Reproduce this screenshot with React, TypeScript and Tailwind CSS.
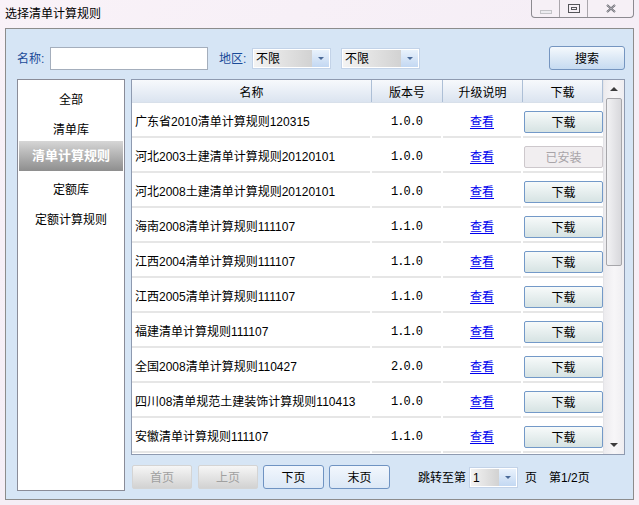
import React from "react";

const rows: { name: string; ver: string; installed?: boolean }[] = [
  { name: "广东省2010清单计算规则120315", ver: "1.0.0" },
  { name: "河北2003土建清单计算规则20120101", ver: "1.0.0", installed: true },
  { name: "河北2008土建清单计算规则20120101", ver: "1.0.0" },
  { name: "海南2008清单计算规则111107", ver: "1.1.0" },
  { name: "江西2004清单计算规则111107", ver: "1.1.0" },
  { name: "江西2005清单计算规则111107", ver: "1.1.0" },
  { name: "福建清单计算规则111107", ver: "1.1.0" },
  { name: "全国2008清单计算规则110427", ver: "2.0.0" },
  { name: "四川08清单规范土建装饰计算规则110413", ver: "1.0.0" },
  { name: "安徽清单计算规则111107", ver: "1.1.0" },
];

function Select({ value, w }: { value: string; w: string }) {
  return (
    <div className={`flex h-[21px] ${w} border border-[#c3d3e8] bg-white p-[1px]`}>
      <div className="flex flex-1 items-center bg-gradient-to-r from-[#f3f3f3] to-[#d2d2d2] pl-[2px] pt-[1px] text-[12px] leading-none text-black">
        {value}
      </div>
      <div className="flex w-[17px] items-center justify-center bg-gradient-to-b from-[#e9f2fc] to-[#c3d8f2]">
        <div className="h-0 w-0 border-x-[3px] border-t-[3px] border-x-transparent border-t-[#4a6a98]" />
      </div>
    </div>
  );
}

export default function App() {
  const sidebar = ["全部", "清单库", "清单计算规则", "定额库", "定额计算规则"];
  return (
    <div className="flex h-[505px] w-[639px] flex-col bg-gradient-to-br from-[#f9f2f8] via-[#f5eef6] to-[#f8eff6] font-['Liberation_Sans','Noto_Sans_CJK_SC',sans-serif] text-[12px] text-black">
      {/* Title bar */}
      <div className="flex h-[28px] items-start justify-between">
        <div className="pl-[5px] pt-[7px] text-[12px] leading-[14px] text-black">选择清单计算规则</div>
        <div className="mr-[5px] flex h-[18px] rounded-b-[4px] border border-t-0 border-[#8c8a90] bg-[#f6f0f6]">
          <div className="flex w-[28px] items-end justify-center border-r border-[#aaa6ac] pb-[3px]">
            <div className="h-[4px] w-[12px] border border-[#c4c4c8] bg-[#ececf0]" />
          </div>
          <div className="flex w-[28px] items-center justify-center border-r border-[#aaa6ac]">
            <div className="flex h-[9px] w-[12px] items-center justify-center border border-[#55555a]">
              <div className="h-[3px] w-[6px] border border-[#55555a]" />
            </div>
          </div>
          <div className="flex w-[45px] items-center justify-center">
            <svg width="10" height="9" viewBox="0 0 10 9">
              <path d="M1 1 L9 8 M9 1 L1 8" stroke="#606068" strokeWidth="2" fill="none" />
              <path d="M1 1 L9 8 M9 1 L1 8" stroke="#e8e8ec" strokeWidth="0.6" fill="none" />
            </svg>
          </div>
        </div>
      </div>

      {/* Panel */}
      <div className="mx-[5px] mb-[5px] flex flex-1 flex-col border border-[#8c8c8c] bg-[#d6e5f5] pl-[11px] pr-[8px]">
        {/* Search row */}
        <div className="flex h-[50px] items-center pt-[8px]">
          <span className="w-[33px] pt-[1px] text-[#1a4a98]">名称:</span>
          <div className="h-[23px] w-[158px] border border-[#a4aebc] bg-white" />
          <span className="ml-[11px] w-[33px] pt-[1px] text-[#1a4a98]">地区:</span>
          <div>
            <Select value="不限" w="w-[79px]" />
          </div>
          <div className="ml-[10px]">
            <Select value="不限" w="w-[79px]" />
          </div>
          <div className="ml-auto flex h-[24px] w-[76px] items-center justify-center rounded-[3px] border border-[#7595c0] bg-gradient-to-b from-[#f5f9fd] via-[#dde9f6] to-[#c6dbf1] pt-[1px] text-black">
            搜索
          </div>
        </div>

        {/* Body */}
        <div className="flex h-[412px] gap-[6px]">
          {/* Sidebar */}
          <div className="flex h-full w-[108px] flex-col border border-[#8a8c98] bg-white pt-[4px]">
            {sidebar.map((s, i) =>
              i === 2 ? (
                <div
                  key={s}
                  className="mx-[1px] -mt-[3px] mb-[3px] flex h-[30px] items-center justify-center bg-gradient-to-b from-[#d6d6d6] to-[#8e8e8e] text-[13px] font-bold text-white"
                >
                  {s}
                </div>
              ) : (
                <div key={s} className="flex h-[30px] items-center justify-center pt-[1px] text-[12px]">
                  {s}
                </div>
              )
            )}
          </div>

          {/* Right */}
          <div className="flex w-[494px] flex-col">
            <div className="flex h-[376px] border border-[#8e9ab0] bg-white">
              <div className="flex w-[471px] flex-col">
                {/* Header */}
                <div className="flex h-[23px] border-b border-[#d8e0ea] bg-gradient-to-b from-[#f7f9fc] to-[#dbe4f0]">
                  <div className="flex w-[240px] items-center justify-center border-r border-[#adbfd6] pt-[3px]">名称</div>
                  <div className="flex w-[71px] items-center justify-center border-r border-[#adbfd6] pt-[3px]">版本号</div>
                  <div className="flex w-[80px] items-center justify-center border-r border-[#adbfd6] pt-[3px]">升级说明</div>
                  <div className="flex w-[80px] items-center justify-center border-r border-[#adbfd6] pt-[3px]">下载</div>
                </div>
                {rows.map((r) => (
                  <div key={r.name} className="flex h-[35px]">
                    <div className="w-[240px] pr-[2px]">
                      <div className="flex h-full items-center border-b-2 border-[#e6e6e6] pl-[3px] pt-[5px]">{r.name}</div>
                    </div>
                    <div className="w-[71px] pr-[2px]">
                      <div className="flex h-full items-center justify-center border-b-2 border-[#e6e6e6] pt-[5px] font-['Liberation_Mono',monospace] text-[12px] tracking-[-1px]">
                        {r.ver}
                      </div>
                    </div>
                    <div className="w-[80px] pr-[2px]">
                      <div className="flex h-full items-center justify-center border-b-2 border-[#e6e6e6] pt-[5px]">
                        <span className="text-[#0000ee] underline underline-offset-2">查看</span>
                      </div>
                    </div>
                    <div className="w-[80px]">
                      <div className="flex h-full items-center border-b-2 border-[#e6e6e6] pl-[1px] pt-[5px]">
                        {r.installed ? (
                          <div className="flex h-[22px] w-[79px] items-center justify-center rounded-[2px] border border-[#cdc8cc] bg-[#f1eef0] pt-[1px] text-[#a8a4a8]">
                            已安装
                          </div>
                        ) : (
                          <div className="flex h-[22px] w-[79px] items-center justify-center rounded-[2px] border border-[#7399c8] bg-gradient-to-b from-[#f7fafa] to-[#d6e3e3] pt-[1px]">
                            下载
                          </div>
                        )}
                      </div>
                    </div>
                  </div>
                ))}
              </div>
              {/* Scrollbar */}
              <div className="flex w-[21px] flex-col border-l border-[#e4e4e8] bg-gradient-to-r from-[#ecebee] via-[#f7f6f8] to-[#efeef1]">
                <div className="flex h-[18px] items-center justify-center">
                  <div className="h-0 w-0 border-x-[4px] border-b-[4px] border-x-transparent border-b-[#3c3c3c]" />
                </div>
                <div className="mx-[2px] h-[168px] rounded-[2px] border border-[#a6a6aa] bg-gradient-to-r from-[#f2f2f4] to-[#d8d8dc]" />
                <div className="flex-1" />
                <div className="flex h-[18px] items-center justify-center">
                  <div className="h-0 w-0 border-x-[4px] border-t-[4px] border-x-transparent border-t-[#3c3c3c]" />
                </div>
              </div>
            </div>

            {/* Pagination */}
            <div className="mt-[10px] flex h-[24px] items-center pl-[1px]">
              <div className="flex h-[24px] w-[60px] items-center justify-center rounded-[2px] border border-[#d4d4d4] bg-gradient-to-b from-[#f6f6f6] to-[#d2d2d2] pt-[1px] text-[#a0a0a0]">
                首页
              </div>
              <div className="ml-[6px] flex h-[24px] w-[60px] items-center justify-center rounded-[2px] border border-[#d4d4d4] bg-gradient-to-b from-[#f6f6f6] to-[#d2d2d2] pt-[1px] text-[#a0a0a0]">
                上页
              </div>
              <div className="ml-[5px] flex h-[24px] w-[61px] items-center justify-center rounded-[3px] border border-[#6f93c2] bg-gradient-to-b from-[#f2f7fd] to-[#dce8f6] pt-[1px]">
                下页
              </div>
              <div className="ml-[5px] flex h-[24px] w-[61px] items-center justify-center rounded-[3px] border border-[#6f93c2] bg-gradient-to-b from-[#f2f7fd] to-[#dce8f6] pt-[1px]">
                末页
              </div>
              <span className="ml-[28px] pt-[2px]">跳转至第</span>
              <div className="ml-[3px]">
                <Select value="1" w="w-[49px]" />
              </div>
              <span className="ml-[7px] pt-[2px]">页</span>
              <span className="ml-[12px] pt-[2px]">第1/2页</span>
            </div>
          </div>
        </div>
      </div>
    </div>
  );
}
